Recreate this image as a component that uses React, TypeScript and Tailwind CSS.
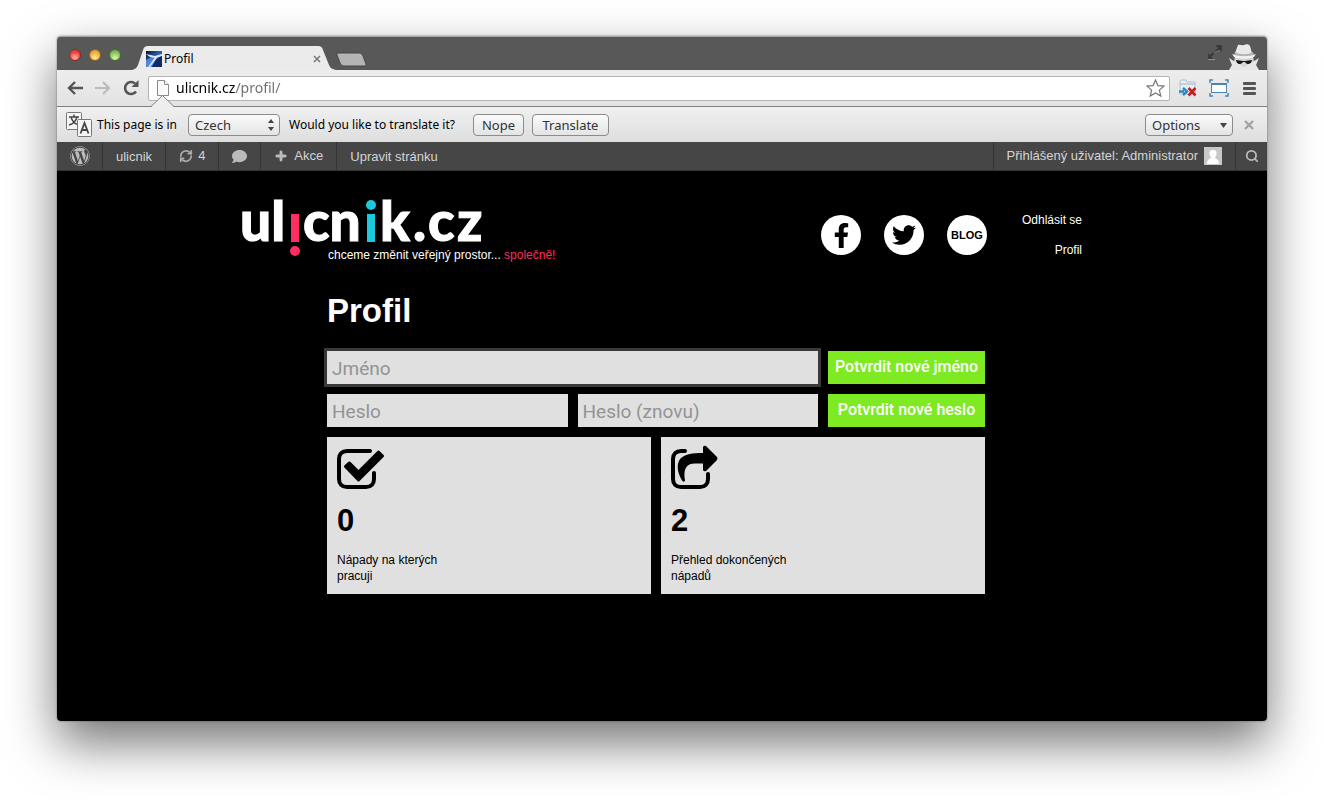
import React, { useState } from 'react';
import { FaFacebookF, FaTwitter, FaWordpress, FaComment } from 'react-icons/fa';
import { Search, Plus, RefreshCw } from 'lucide-react';

const chromeButton =
  'h-[22px] rounded-[4px] border border-[#8c8c8c] bg-gradient-to-b from-[#fafafa] to-[#e4e4e4] text-[13px] leading-5 text-[#333]';

const TrafficLights: React.FC = () => (
  <div className="flex gap-2 self-start pt-3">
    <button aria-label="Close window" className="size-3 rounded-full border border-[#8b2a26] bg-[radial-gradient(circle_at_50%_80%,#ffb3a8,#e8483f_60%,#c43b35)]" />
    <button aria-label="Minimize window" className="size-3 rounded-full border border-[#94661f] bg-[radial-gradient(circle_at_50%_80%,#ffeaa0,#f0b040_60%,#cf8f2c)]" />
    <button aria-label="Zoom window" className="size-3 rounded-full border border-[#48702f] bg-[radial-gradient(circle_at_50%_80%,#dcf8b0,#84c25c_60%,#62a040)]" />
  </div>
);

const Favicon: React.FC = () => (
  <svg width="16" height="16" viewBox="0 0 16 16">
    <defs>
      <linearGradient id="sky" x1="0" y1="0" x2="1" y2="1">
        <stop offset="0" stopColor="#0a1228" />
        <stop offset="0.5" stopColor="#2b62b8" />
        <stop offset="1" stopColor="#081a48" />
      </linearGradient>
    </defs>
    <rect width="16" height="16" fill="url(#sky)" />
    <path d="M0 9l6-3 10-3-4 4-3 3-3 6H0z" fill="#4f86d8" />
    <path d="M0 3l9 2 7-2v2l-6 2-6-1z" fill="#dfeafc" />
    <path d="M10 8l6-3v11H6z" fill="#12296a" />
    <path d="M9 6l2 1-7 9H2z" fill="#cfe0fa" />
  </svg>
);

const Incognito: React.FC = () => (
  <svg width="32" height="26" viewBox="0 0 32 26">
    <path d="M7 12h18l1 6-3 8H9l-3-8z" fill="#d4d4d4" />
    <path d="M10 1c2-1 4 1 6 0s5-1 6 1l2 7c-5 3-12 3-17 0z" fill="#e9e9e9" />
    <path d="M7 8c5 3 13 3 18 0l1 3c-6 3-14 3-20 0z" fill="#b4b4b4" />
    <path d="M4 10c7 3 17 3 24 0l-2 3c-6 2-14 2-20 0z" fill="#f3f3f3" />
    <path d="M8 16l7 1h2l7-1-1 3c-2 2-5 1-6-1h-2c-1 2-5 3-6 1z" fill="#161616" />
    <path d="M1 26l3-5-3-7 8 5 7 4 7-4 8-5-3 7 3 5z" fill="#e6e6e6" />
  </svg>
);

const TitleBar: React.FC = () => (
  <div className="flex h-[34px] items-end rounded-t-[4px] border-t border-[#a5a5a5] bg-[#585858] pl-3">
    <TrafficLights />
    <div className="relative ml-[11px] flex h-6 w-[204px] items-center pl-[14px] pt-[2px]">
      <svg className="absolute inset-0" width="204" height="24" viewBox="0 0 204 24">
        <path d="M0 24c4-1 5-3 6-5l5-15c1-3 2-4 5-4h170c3 0 4 1 5 4l6 15c1 2 2 4 7 5z" fill="#ebebeb" />
      </svg>
      <div className="relative flex flex-1 items-center gap-[2px]">
        <Favicon />
        <span className="text-[12px] leading-4 text-black">Profil</span>
      </div>
      <button aria-label="Close tab" className="relative mr-[15px] text-[#777]">
        <svg width="8" height="8" viewBox="0 0 8 8" stroke="currentColor" strokeWidth="1.5">
          <path d="M1 1l6 6M7 1l-6 6" />
        </svg>
      </button>
    </div>
    <button aria-label="New tab" className="mb-[3px]">
      <svg width="31" height="15" viewBox="0 0 31 15">
        <path d="M2 1h21c2 0 3 1 4 3l3 8c0 2 0 2-2 2H8c-2 0-3-1-4-3L1 3c0-1 0-2 1-2z" fill="#b4b4b4" stroke="#454545" />
      </svg>
    </button>
    <div className="ml-auto flex items-end gap-[6px] pr-[7px]">
      <svg className="mb-[10px]" width="14" height="15" viewBox="0 0 14 15" fill="#3a3a3a">
        <path d="M7 0h7v7l-2-2-3 3-2-2 3-3z" />
        <path d="M7 15H0V8l2 2 3-3 1 2-3 3z" />
        <path d="M0 14.500h7M7.500 7.500l4-2" stroke="#909090" />
      </svg>
      <Incognito />
    </div>
  </div>
);

const Toolbar: React.FC = () => {
  const [address, setAddress] = useState('ulicnik.cz/profil/');

  return (
    <div className="flex h-[37px] items-center border-b border-[#808080] bg-gradient-to-b from-[#ededed] to-[#e3e3e3] pl-[10px] pr-[7px]">
      <button aria-label="Back">
        <svg width="16" height="14" viewBox="0 0 16 14" fill="none" stroke="#555" strokeWidth="2.4">
          <path d="M8 1L2 7l6 6M2 7h14" />
        </svg>
      </button>
      <button aria-label="Forward" className="ml-3">
        <svg width="16" height="14" viewBox="0 0 16 14" fill="none" stroke="#bcbcbc" strokeWidth="2.2">
          <path d="M8 1l6 6-6 6M14 7H0" />
        </svg>
      </button>
      <button aria-label="Reload" className="ml-3">
        <svg width="16" height="16" viewBox="0 0 16 16">
          <path d="M13 11.500A6 6 0 1 1 12 3.500" fill="none" stroke="#555" strokeWidth="2.600" />
          <path d="M15.500 0v7h-7z" fill="#555" />
        </svg>
      </button>
      <div className="relative ml-[9px] flex h-[25px] flex-1 items-center rounded-[2px] border border-[#b4b4b4] bg-white pl-2 pr-1">
        <svg width="12" height="16" viewBox="0 0 12 16" fill="#fafafa" stroke="#8a8a8a">
          <path d="M.5.500h7l4 4v11H.5z" />
          <path d="M7.500.500v4h4" />
        </svg>
        <input
          aria-label="Address"
          value={address}
          onChange={(e) => setAddress(e.target.value)}
          className="ml-[7px] min-w-0 flex-1 bg-[linear-gradient(90deg,#000_60px,#6e6e6e_60px)] bg-clip-text text-[14px] leading-5 text-transparent outline-none"
        />
        <button aria-label="Bookmark this page">
          <svg width="19" height="18" viewBox="0 0 19 18" fill="#fff" stroke="#777" strokeWidth="1.200">
            <path d="M9.500 1l2.400 5.600 6.100.500-4.600 4 1.400 6-5.300-3.200-5.300 3.200 1.400-6L1 7.100l6.100-.500z" />
          </svg>
        </button>
        {/* pointer from the info bar up to the page icon */}
        <svg className="absolute left-[2px] top-[18px]" width="23" height="13" viewBox="0 0 23 13">
          <path d="M0 13v-1L11.500 0 23 12v1z" fill="#eee" />
          <path d="M0 11.500L11.500.500 23 11.500" fill="none" stroke="#808080" />
        </svg>
      </div>
      <button aria-label="Switch proxy" className="ml-[9px]">
        <svg width="18" height="18" viewBox="0 0 18 18">
          <path d="M1 2l1-1h5l1 2h8v12H1z" fill="#e8eef3" stroke="#b4c4d0" />
          <path d="M1 5h15" stroke="#9fb6c6" />
          <path d="M0 12.500h5M4 9l4 3.500L4 16" fill="none" stroke="#2f86bd" strokeWidth="2.400" />
          <path d="M9.500 9l7 7.500M16.500 9l-7 7.500" stroke="#c42020" strokeWidth="2.600" />
        </svg>
      </button>
      <button aria-label="Resize window" className="ml-3">
        <svg width="20" height="18" viewBox="0 0 20 18" fill="none" stroke="#4c86b0">
          <path d="M1 4V1h3M16 1h3v3M19 14v3h-3M4 17H1v-3" strokeWidth="1.500" />
          <rect x="2.500" y="4.500" width="15" height="9" fill="#f8fbfd" />
          <path d="M2 5h16" strokeWidth="2" />
        </svg>
      </button>
      <button aria-label="Menu" className="ml-[14px] mr-1 flex w-[13px] flex-col gap-[2px]">
        <span className="h-[3px] rounded-[1px] bg-[#555]" />
        <span className="h-[3px] rounded-[1px] bg-[#555]" />
        <span className="h-[3px] rounded-[1px] bg-[#555]" />
      </button>
    </div>
  );
};

const TranslateBar: React.FC = () => (
  <div className="flex h-[35px] items-center bg-gradient-to-b from-[#f0f0f0] to-[#dedede] pl-2 pr-[13px] text-[12px] leading-4 text-black">
    <svg width="28" height="26" viewBox="0 0 28 26">
      <rect x="1.500" y=".5" width="15" height="17" rx="1" fill="#f6f6f6" stroke="#777" />
      <path d="M4 5h10M9 2.500V5M6 5c1 4 4 7 8 8M12 5c-1 4-4 7-8 8" fill="none" stroke="#444" strokeWidth="1.400" />
      <rect x="12.500" y="7.500" width="14" height="17" rx="1" fill="#f6f6f6" stroke="#777" />
      <path d="M15.500 21.500l4-10.500 4 10.500M17 18h5" fill="none" stroke="#444" strokeWidth="1.800" />
    </svg>
    <label htmlFor="page-language" className="ml-1 min-w-[85px]">This page is in</label>
    <div className="relative ml-[6px]">
      <select id="page-language" className={`${chromeButton} block w-[92px] appearance-none pl-[6px]`}>
        <option>Czech</option>
        <option>English</option>
      </select>
      <svg className="pointer-events-none absolute right-[6px] top-[5px]" width="6" height="12" viewBox="0 0 6 12" fill="#444">
        <path d="M3 0l3 4H0zM3 12l3-4H0z" />
      </svg>
    </div>
    <span className="ml-[9px] min-w-[174px]">Would you like to translate it?</span>
    <button className={`${chromeButton} ml-[10px] w-[51px]`}>Nope</button>
    <button className={`${chromeButton} ml-2 w-[77px]`}>Translate</button>
    <div className="relative ml-auto">
      <select aria-label="Options" className={`${chromeButton} block w-[88px] appearance-none pl-[6px]`}>
        <option>Options</option>
      </select>
      <svg className="pointer-events-none absolute right-[6px] top-[9px]" width="7" height="5" viewBox="0 0 7 5" fill="#444">
        <path d="M0 0h7L3.500 5z" />
      </svg>
    </div>
    <button aria-label="Close" className="ml-[11px]">
      <svg width="10" height="10" viewBox="0 0 10 10" stroke="#a0a0a0" strokeWidth="2.200">
        <path d="M1 1l8 8M9 1L1 9" />
      </svg>
    </button>
  </div>
);

const AdminBar: React.FC = () => (
  <nav className="flex h-[29px] items-stretch border-b border-[#333] bg-[#464646] font-['Liberation_Sans',sans-serif] text-[13px] leading-[30px] text-[#d4d4d4]">
    <a href="#" aria-label="WordPress" className="flex w-[46px] items-center justify-center border-r border-[#333] text-[#bbb]">
      <FaWordpress size={20} />
    </a>
    <a href="#" className="border-r border-[#333] px-[13px]">ulicnik</a>
    <a href="#" className="flex items-center gap-[5px] border-r border-[#333] px-[13px]">
      <RefreshCw size={14} strokeWidth={3} className="text-[#aaa]" />
      4
    </a>
    <a href="#" aria-label="Comments" className="flex items-center border-r border-[#333] px-[13px] text-[#bbb]">
      <FaComment size={15} />
    </a>
    <a href="#" className="flex items-center gap-[6px] border-r border-[#333] px-[13px]">
      <Plus size={14} strokeWidth={5} className="text-[#bbb]" />
      Akce
    </a>
    <a href="#" className="px-[13px]">Upravit stránku</a>
    <a href="#" className="ml-auto flex items-center gap-[6px] border-x border-[#333] px-[13px]">
      Přihlášený uživatel: Administrator
      <svg width="18" height="18" viewBox="0 0 18 18">
        <rect width="18" height="18" fill="#c8c8c8" />
        <path d="M9 3c3 0 4 2 3.500 4.500C12 9.500 11 10 11 11c2 1 4 2 4 6H3c0-4 2-5 4-6 0-1-1-1.500-1.500-3.500C5 5 6 3 9 3z" fill="#fff" />
      </svg>
    </a>
    <button aria-label="Search" className="flex w-[31px] items-center justify-center text-[#bbb]">
      <Search size={14} strokeWidth={3} />
    </button>
  </nav>
);

const Logo: React.FC = () => (
  <svg width="250" height="60" viewBox="0 0 250 60" className="font-['Lato',sans-serif] text-[55px] font-black" fill="#fff">
    <g stroke="#fff">
      <text x="-2" y="44">ul</text>
      <text x="61" y="44">cn</text>
      <text x="138 171 186 215" y="44">k.cz</text>
    </g>
    <rect x="49" y="17" width="8" height="28" fill="#ff2d62" />
    <circle cx="53" cy="54" r="5" fill="#ff2d62" />
    <rect x="125" y="17" width="8" height="28" fill="#1cc8dc" />
    <circle cx="129" cy="8" r="5" fill="#1cc8dc" />
  </svg>
);

const SiteHeader: React.FC = () => (
  <header className="flex items-start justify-between pt-[26px]">
    <div>
      <a href="#" aria-label="ulicnik.cz" className="block h-[50px]">
        <Logo />
      </a>
      <p className="pl-[86px] text-[12px] leading-4 text-white">
        chceme změnit veřejný prostor... <span className="text-[#ff2d55]">společně!</span>
      </p>
    </div>
    <div className="flex pt-[15px]">
      <div className="flex gap-[23px] pt-[3px]">
        <a href="#" aria-label="Facebook" className="flex size-10 items-center justify-center rounded-full bg-white text-black">
          <FaFacebookF size={25} />
        </a>
        <a href="#" aria-label="Twitter" className="flex size-10 items-center justify-center rounded-full bg-white text-black">
          <FaTwitter size={24} />
        </a>
        <a href="#" className="flex size-10 items-center justify-center rounded-full bg-white text-[11px] font-bold text-black">
          BLOG
        </a>
      </div>
      <div className="flex w-[95px] flex-col gap-[14px] text-right text-[12px] leading-4 text-white">
        <a href="#">Odhlásit se</a>
        <a href="#">Profil</a>
      </div>
    </div>
  </header>
);

const fieldClass =
  "h-[33px] min-w-0 bg-[#e0e0e0] px-[5px] pt-[2px] font-['Roboto',sans-serif] text-[19px] leading-6 text-black placeholder:text-[#939393]";
const submitClass =
  "h-[33px] bg-[#7eea22] pb-[2px] font-['Roboto',sans-serif] text-[16px] leading-5 font-medium whitespace-nowrap text-white";

const CheckIcon: React.FC = () => (
  <svg width="48" height="44" viewBox="0 0 48 44" stroke="#000">
    <path d="M33 4H10C5 4 2 7 2 12v20c0 5 3 8 8 8h19c5 0 8-3 8-8v-6" fill="none" strokeWidth="4" strokeLinecap="round" />
    <path d="M8.500 19.500l4-3.500 9 9 20-20 4 4-24 24z" strokeWidth="3" strokeLinejoin="round" />
  </svg>
);

const ShareIcon: React.FC = () => (
  <svg width="48" height="44" viewBox="0 0 48 44" className="overflow-visible">
    <path d="M14 4h-4C5 4 2 7 2 12v20c0 5 3 8 8 8h19c5 0 8-3 8-8v-5" fill="none" stroke="#000" strokeWidth="4" strokeLinecap="round" />
    <path d="M32 0q1-2 3-1l11 11q1 1 0 3L35 24q-2 1-3-1v-6.500h-8c-9 0-12 6-10 17-1 2-2 1-3 0C6 25 5 16 10 11c5-4 11-5 22-5z" fill="#000" />
  </svg>
);

interface StatCardProps {
  icon: React.ReactNode;
  count: number;
  label: string;
}

const StatCard: React.FC<StatCardProps> = ({ icon, count, label }) => (
  <div className="min-h-[157px] flex-1 bg-[#e0e0e0] p-[10px] text-black">
    {icon}
    <div className="mt-[14px] text-[31px] leading-8 font-bold">{count}</div>
    <p className="mt-[15px] w-[130px] text-[12px] leading-4">{label}</p>
  </div>
);

const ProfilePage: React.FC = () => (
  <div className="flex-1 rounded-b-[4px] bg-black font-['Liberation_Sans',sans-serif]">
    <div className="mx-auto max-w-[840px]">
      <SiteHeader />
      <main className="pb-10 pl-[85px] pr-[97px]">
        <h1 className="mt-7 text-[33px] leading-10 font-bold text-white">Profil</h1>
        <form className="mt-5 grid grid-cols-[1fr_1fr_157px] gap-[10px]" onSubmit={(e) => e.preventDefault()}>
          <input aria-label="Jméno" placeholder="Jméno" className={`${fieldClass} col-span-2 outline-3 outline-[#3a3a3a]`} />
          <button className={submitClass}>Potvrdit nové jméno</button>
          <input type="password" aria-label="Heslo" placeholder="Heslo" className={fieldClass} />
          <input type="password" aria-label="Heslo (znovu)" placeholder="Heslo (znovu)" className={fieldClass} />
          <button className={submitClass}>Potvrdit nové heslo</button>
        </form>
        <div className="mt-[10px] flex gap-[10px]">
          <StatCard icon={<CheckIcon />} count={0} label="Nápady na kterých pracuji" />
          <StatCard icon={<ShareIcon />} count={2} label="Přehled dokončených nápadů" />
        </div>
      </main>
    </div>
  </div>
);

export default function App() {
  return (
    <div className="flex min-h-screen flex-col bg-white px-[57px] pb-[79px] pt-9 font-['Noto_Sans',sans-serif]">
      <div className="flex flex-1 flex-col rounded-[4px] shadow-[0_22px_50px_rgba(0,0,0,0.55),0_0_2px_rgba(0,0,0,0.5)]">
        <TitleBar />
        <Toolbar />
        <TranslateBar />
        <AdminBar />
        <ProfilePage />
      </div>
    </div>
  );
}
